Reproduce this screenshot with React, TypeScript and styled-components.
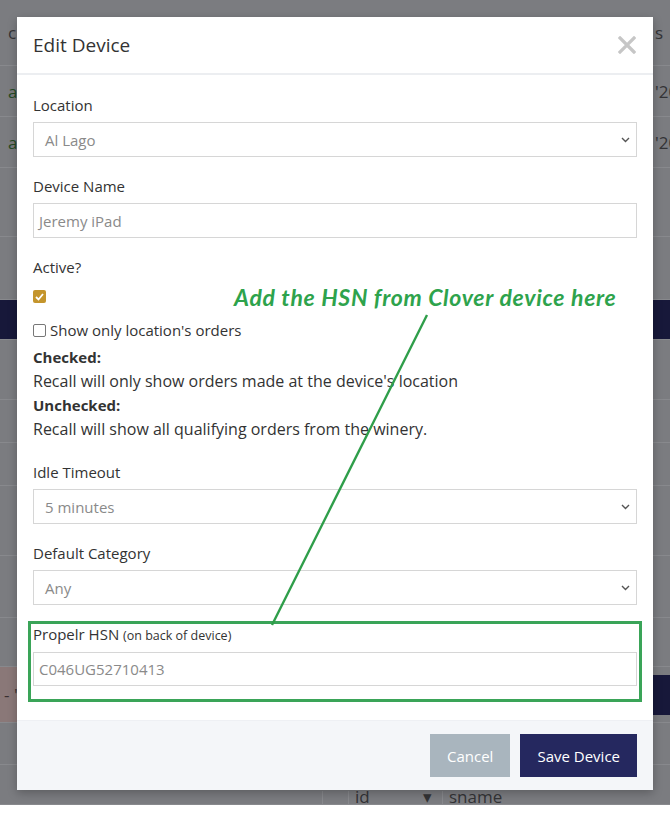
import React from 'react';
import styled, { createGlobalStyle } from 'styled-components';

const GlobalStyle = createGlobalStyle`
  html, body { margin: 0; padding: 0; background: #fff; }
  body { font-family: "Open Sans", "Liberation Sans", sans-serif; color: #333; }
`;

const Page = styled.div`
  position: relative;
  width: 670px;
  height: 837px;
  overflow: hidden;
`;

/* ---------- dimmed page behind the dialog ---------- */

const Backdrop = styled.div`
  height: 805px;
  background: #7b7c80;
  display: flex;
  flex-direction: column;
`;

const BgRow = styled.div<{ $h: number; $dark?: boolean }>`
  flex: none;
  height: ${p => p.$h}px;
  box-sizing: border-box;
  border-bottom: 1px solid #88898d;
  background: ${p => (p.$dark ? '#17183a' : 'transparent')};
  display: flex;
  align-items: center;
  justify-content: space-between;
  font-size: 17px;
  white-space: nowrap;
`;

const BgCell = styled.span<{ $green?: boolean }>`
  padding-left: 8px;
  color: ${p => (p.$green ? '#244a24' : '#333336')};
`;

const BgEdge = styled.span`
  width: 15px;
  overflow: hidden;
  color: #333336;
`;

const AlertCell = styled.div`
  flex: 1;
  align-self: stretch;
  background: #8a7878;
  display: flex;
  align-items: center;
  padding-left: 4px;
  font-size: 17px;
  color: #3a3030;
`;

const EdgeBlock = styled.div`
  width: 17px;
  align-self: stretch;
  display: flex;
  align-items: center;
`;

const DarkChip = styled.div`
  width: 100%;
  height: 40px;
  background: #17183a;
`;

const FilterRow = styled.div`
  display: flex;
  align-items: flex-end;
  align-self: stretch;
  padding-left: 322px;
  font-size: 17px;
  color: #333336;
`;

const FilterCell = styled.div<{ $w: number }>`
  width: ${p => p.$w}px;
  height: 13px;
  box-sizing: border-box;
  border-left: 1px solid #88898d;
  display: flex;
  align-items: flex-end;
  padding-left: 6px;
  line-height: 15px;
  overflow: hidden;
`;

/* ---------- dialog ---------- */

const Modal = styled.div`
  position: absolute;
  top: 17px;
  left: 17px;
  width: 636px;
  background: #fff;
  box-shadow: 0 3px 9px rgba(0, 0, 0, 0.25);
`;

const Header = styled.div`
  height: 58px;
  box-sizing: border-box;
  padding: 0 17px 0 16px;
  display: flex;
  align-items: center;
  justify-content: space-between;
  border-bottom: 2px solid #eceef1;
`;

const Title = styled.h4`
  margin: 0;
  font-size: 19px;
  font-weight: 400;
  color: #333;
`;

const Body = styled.div`
  padding: 20px 16px 18px;
`;

const Group = styled.div<{ $gap?: number }>`
  margin-bottom: ${p => p.$gap ?? 19}px;
`;

const Label = styled.label<{ $flush?: boolean }>`
  display: block;
  font-size: 15px;
  line-height: 21px;
  margin-bottom: ${p => (p.$flush ? 0 : 6)}px;
  color: #333;
`;

const Small = styled.span`
  font-size: 12.5px;
`;

const Select = styled.div`
  height: 35px;
  box-sizing: border-box;
  border: 1px solid #d6d6d6;
  padding: 0 6px 0 11px;
  display: flex;
  align-items: center;
  justify-content: space-between;
  font-size: 15px;
  color: #8a8a8a;
`;

const Input = styled.div<{ $h?: number }>`
  height: ${p => p.$h ?? 35}px;
  box-sizing: border-box;
  border: 1px solid #d6d6d6;
  padding: 0 5px;
  display: flex;
  align-items: center;
  font-size: 15px;
  color: #8a8a8a;
`;

const GoldBox = styled.span`
  display: flex;
  align-items: center;
  justify-content: center;
  width: 13px;
  height: 13px;
  margin-top: 12px;
  border-radius: 2px;
  background: #c4952c;
`;

const CheckRow = styled.label`
  display: flex;
  align-items: center;
  gap: 4px;
  margin-top: 17px;
  font-size: 15px;
  line-height: 21px;
`;

const EmptyBox = styled.span`
  width: 11px;
  height: 11px;
  border: 1px solid #777;
  border-radius: 2px;
  background: #fff;
`;

const Help = styled.div`
  margin-top: 4px;
  font-size: 16px;
  line-height: 24px;
  color: #333;
`;

const HelpHead = styled.div`
  font-size: 15px;
  font-weight: 700;
`;

const Highlight = styled.div`
  margin: 16px -5px 0;
  border: 3px solid #3aa458;
  padding: 0 2px 13px;
`;

const Footer = styled.div`
  height: 70px;
  box-sizing: border-box;
  background: #f4f6f9;
  border-top: 1px solid #eef0f4;
  padding: 13px 16px 0;
  display: flex;
  justify-content: flex-end;
  align-items: flex-start;
  gap: 10px;
`;

const Button = styled.button<{ $primary?: boolean }>`
  height: 43px;
  padding: 0 17px;
  border: none;
  border-radius: 0;
  background: ${p => (p.$primary ? '#25285f' : '#a9b5be')};
  color: #fff;
  font-family: "Open Sans", "Liberation Sans", sans-serif;
  font-size: 15px;
`;

/* ---------- annotation ---------- */

const Callout = styled.div`
  position: absolute;
  left: 234px;
  top: 282px;
  font-family: Lato, "Open Sans", sans-serif;
  font-style: italic;
  font-weight: 700;
  font-size: 23px;
  letter-spacing: 0.7px;
  line-height: 30px;
  color: #2ea34c;
  white-space: nowrap;
`;

const Pointer = styled.svg`
  position: absolute;
  left: 0;
  top: 0;
  pointer-events: none;
`;

const Chevron = () => (
  <svg width="9" height="6" viewBox="0 0 9 6">
    <polyline points="1,1 4.5,4.5 8,1" fill="none" stroke="#555" strokeWidth="1.4" />
  </svg>
);

const CloseIcon = () => (
  <svg width="18" height="18" viewBox="0 0 18 18">
    <path d="M2 2 L16 16 M16 2 L2 16" stroke="#c6c6c6" strokeWidth="3.2" strokeLinecap="square" />
  </svg>
);

const Tick = () => (
  <svg width="9" height="8" viewBox="0 0 9 8">
    <polyline points="1,4 3.5,6.5 8,1" fill="none" stroke="#fff" strokeWidth="1.8" />
  </svg>
);

export default function App() {
  return (
    <Page>
      <GlobalStyle />
      <Backdrop>
        <BgRow $h={66}>
          <BgCell>c</BgCell>
          <BgEdge>s</BgEdge>
        </BgRow>
        <BgRow $h={51}>
          <BgCell $green>a</BgCell>
          <BgEdge>'20</BgEdge>
        </BgRow>
        <BgRow $h={51}>
          <BgCell $green>a</BgCell>
          <BgEdge>'20</BgEdge>
        </BgRow>
        <BgRow $h={69} />
        <BgRow $h={63} />
        <BgRow $h={40} $dark />
        <BgRow $h={60} />
        <BgRow $h={43} />
        <BgRow $h={43} />
        <BgRow $h={70} />
        <BgRow $h={62} />
        <BgRow $h={49} />
        <BgRow $h={56}>
          <AlertCell>- "P</AlertCell>
          <EdgeBlock>
            <DarkChip />
          </EdgeBlock>
        </BgRow>
        <BgRow $h={42} />
        <BgRow $h={40}>
          <FilterRow>
            <FilterCell $w={26} />
            <FilterCell $w={94}>id&nbsp;&nbsp;&nbsp;&nbsp;&nbsp;&nbsp;&nbsp;&nbsp;&nbsp;&nbsp;&nbsp;&nbsp;▾</FilterCell>
            <FilterCell $w={120}>sname</FilterCell>
          </FilterRow>
        </BgRow>
      </Backdrop>

      <Modal>
        <Header>
          <Title>Edit Device</Title>
          <CloseIcon />
        </Header>
        <Body>
          <Group>
            <Label>Location</Label>
            <Select>
              Al Lago
              <Chevron />
            </Select>
          </Group>
          <Group>
            <Label>Device Name</Label>
            <Input>Jeremy iPad</Input>
          </Group>
          <Group $gap={21}>
            <Label $flush>Active?</Label>
            <GoldBox>
              <Tick />
            </GoldBox>
            <CheckRow>
              <EmptyBox />
              Show only location's orders
            </CheckRow>
            <Help>
              <HelpHead>Checked:</HelpHead>
              <div>Recall will only show orders made at the device's location</div>
              <HelpHead>Unchecked:</HelpHead>
              <div>Recall will show all qualifying orders from the winery.</div>
            </Help>
          </Group>
          <Group>
            <Label>Idle Timeout</Label>
            <Select>
              5 minutes
              <Chevron />
            </Select>
          </Group>
          <Group $gap={0}>
            <Label>Default Category</Label>
            <Select>
              Any
              <Chevron />
            </Select>
          </Group>
          <Highlight>
            <Label>
              Propelr HSN <Small>(on back of device)</Small>
            </Label>
            <Input $h={34}>C046UG52710413</Input>
          </Highlight>
        </Body>
        <Footer>
          <Button>Cancel</Button>
          <Button $primary>Save Device</Button>
        </Footer>
      </Modal>

      <Callout>Add the HSN from Clover device here</Callout>
      <Pointer width="670" height="837" viewBox="0 0 670 837">
        <line x1="427" y1="315" x2="272" y2="625" stroke="#2f9e4a" strokeWidth="2.4" />
      </Pointer>
    </Page>
  );
}
